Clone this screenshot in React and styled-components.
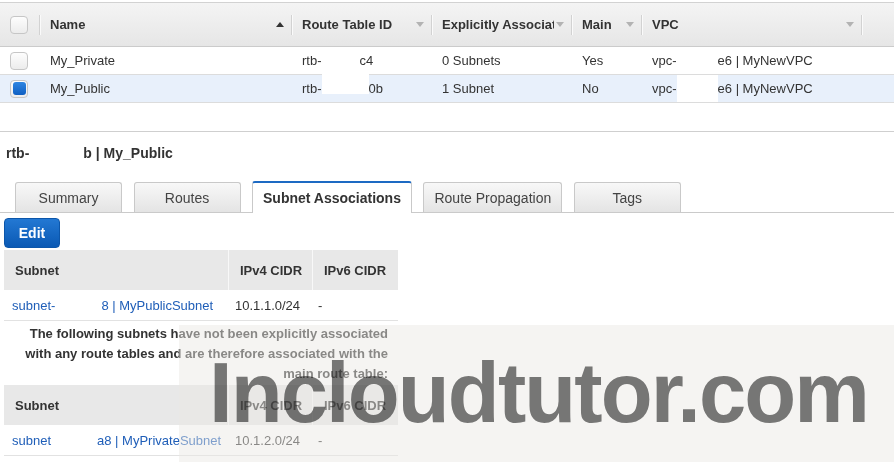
import React from 'react';
import styled, { createGlobalStyle } from 'styled-components';

const GlobalStyle = createGlobalStyle`
    body {
        margin: 0;
        font-family: "Liberation Sans", Arial, sans-serif;
        font-size: 13px;
        color: #333;
        background: #fff;
    }
    * { box-sizing: border-box; }
`;

const COLS = '39px 252px 140px 140px 70px 220px 1fr';

const Page = styled.div`
    position: relative;
    width: 894px;
    height: 462px;
    overflow: hidden;
    background: #fff;
`;

/* 위쪽 목록 */
const ListPane = styled.div`
    height: 131px;
    padding-top: 2px;
`;

const HeadRow = styled.div`
    display: grid;
    grid-template-columns: ${COLS};
    align-items: center;
    height: 45px;
    border-top: 1px solid #d2d2d2;
    border-bottom: 1px solid #cbcbcb;
    background: linear-gradient(#f4f4f4, #e6e6e6);
`;

const HeadCell = styled.div`
    display: flex;
    align-items: center;
    height: 20px;
    padding: 0 7px 0 10px;
    border-left: 1px solid #d2d2d2;
    box-shadow: inset 1px 0 #fafafa;
    font-weight: bold;
    color: #333;
    white-space: nowrap;
    min-width: 0;
`;

const CheckCell = styled.div`
    display: flex;
    align-items: center;
    padding-left: 10px;
`;

const Label = styled.span`
    flex: 1;
    overflow: hidden;
    margin-right: 2px;
`;

const Arrow = styled.span`
    width: 0;
    height: 0;
    border-left: 4px solid transparent;
    border-right: 4px solid transparent;
    ${props => props.$up
        ? 'border-bottom: 5px solid #333;'
        : 'border-top: 5px solid #b3b3b3;'}
`;

const Row = styled.div`
    display: grid;
    grid-template-columns: ${COLS};
    align-items: center;
    height: 28px;
    border-bottom: 1px solid #dcdcdc;
    background: ${props => props.$selected ? '#e8f0fb' : '#fff'};
`;

const Cell = styled.div`
    display: flex;
    align-items: center;
    height: 100%;
    padding-left: 11px;
    white-space: nowrap;
`;

const Checkbox = styled.span`
    display: flex;
    align-items: center;
    justify-content: center;
    width: 18px;
    height: 18px;
    border: 1px solid #c6c6c6;
    border-radius: 4px;
    background: linear-gradient(#fdfdfd, #ececec);
`;

const CheckFill = styled.span`
    width: 13px;
    height: 13px;
    border-radius: 3px;
    background: linear-gradient(#2f86e2, #0f5fc2);
`;

const Redact = styled.span`
    display: inline-block;
    flex-shrink: 0;
    width: ${props => props.$w}px;
    height: ${props => props.$h ? `${props.$h}px` : '100%'};
    margin-top: ${props => props.$lift ? `-${props.$lift}px` : '0'};
    background: #fff;
`;

/* 아래쪽 상세 */
const DetailPane = styled.div`
    border-top: 1px solid #cfcfcf;
`;

const Title = styled.div`
    display: flex;
    padding: 13px 6px 0;
    line-height: 17px;
    font-size: 14px;
    font-weight: bold;
    color: #333;
`;

const Gap = styled.span`
    width: ${props => props.$w}px;
`;

const TabBar = styled.div`
    display: flex;
    align-items: flex-end;
    gap: 11.5px;
    height: 32px;
    margin-top: 19px;
    padding-left: 15px;
    border-bottom: 1px solid #cacaca;
`;

const Tab = styled.div`
    display: flex;
    align-items: center;
    justify-content: center;
    min-width: 107px;
    padding: 0 10px;
    height: ${props => props.$active ? '32px' : '30px'};
    margin-bottom: ${props => props.$active ? '-1px' : '0'};
    border: 1px solid #c9c9c9;
    border-top: ${props => props.$active ? '2px solid #1d6ac3' : '1px solid #c9c9c9'};
    border-bottom: none;
    border-radius: 3px 3px 0 0;
    background: ${props => props.$active ? '#fff' : 'linear-gradient(#f8f8f8, #e4e4e4)'};
    font-size: 14px;
    font-weight: ${props => props.$active ? 'bold' : 'normal'};
    color: ${props => props.$active ? '#333' : '#444'};
`;

const EditButton = styled.button`
    display: block;
    width: 56px;
    height: 30px;
    margin: 5px 0 2px 4px;
    border: 1px solid #0c56aa;
    border-radius: 4px;
    background: linear-gradient(#2378d3, #0a59b4);
    color: #fff;
    font-family: inherit;
    font-size: 14px;
    font-weight: bold;
    padding: 0;
`;

const SubnetBox = styled.div`
    width: 394px;
    margin-left: 4px;
`;

const SubHead = styled.div`
    display: grid;
    grid-template-columns: 224px 84px 86px;
    height: 40px;
    background: #e8e8e8;
`;

const SubHeadCell = styled.div`
    display: flex;
    align-items: center;
    padding-left: 11px;
    border-left: ${props => props.$first ? 'none' : '1px solid #f8f8f8'};
    font-weight: bold;
    color: #333;
`;

const SubRow = styled.div`
    display: grid;
    grid-template-columns: 224px 84px 86px;
    height: 31px;
    border-bottom: 1px solid #e2e2e2;
`;

const SubCell = styled.div`
    display: flex;
    align-items: center;
    padding-left: ${props => props.$pad}px;
    white-space: nowrap;
    color: #333;
`;

const Link = styled.span`
    display: flex;
    align-items: center;
    color: #1f5eb8;
`;

const Note = styled.div`
    padding: 3px 10px 1px 0;
    line-height: 20px;
    text-align: right;
    font-weight: bold;
    color: #333;
`;

/* 워터마크 */
const Veil = styled.div`
    position: absolute;
    left: 179px;
    top: 325px;
    right: 0;
    bottom: 0;
    background: rgba(234, 232, 228, 0.47);
    pointer-events: none;
`;

const Watermark = styled.div`
    padding: 25px 0 0 30px;
    font-size: 85px;
    line-height: 1;
    font-weight: bold;
    letter-spacing: -1.9px;
    color: #7b7b7b;
    mix-blend-mode: multiply;
    white-space: nowrap;
`;

const columns = [
    { label: 'Name', up: true },
    { label: 'Route Table ID' },
    { label: 'Explicitly Associated With' },
    { label: 'Main' },
    { label: 'VPC' },
];

const SubnetHead = () => (
    <SubHead>
        <SubHeadCell $first>Subnet</SubHeadCell>
        <SubHeadCell>IPv4 CIDR</SubHeadCell>
        <SubHeadCell>IPv6 CIDR</SubHeadCell>
    </SubHead>
);

const App = () => (
    <Page>
        <GlobalStyle />
        <ListPane>
            <HeadRow>
                <CheckCell><Checkbox /></CheckCell>
                {columns.map(c => (
                    <HeadCell key={c.label}>
                        <Label>{c.label}</Label>
                        <Arrow $up={c.up} />
                    </HeadCell>
                ))}
                <HeadCell />
            </HeadRow>
            <Row>
                <CheckCell><Checkbox /></CheckCell>
                <Cell>My_Private</Cell>
                <Cell>rtb-<Redact $w={38} $h={20} />c4</Cell>
                <Cell>0 Subnets</Cell>
                <Cell>Yes</Cell>
                <Cell>vpc-<Redact $w={41} />e6 | MyNewVPC</Cell>
                <Cell />
            </Row>
            <Row $selected>
                <CheckCell><Checkbox><CheckFill /></Checkbox></CheckCell>
                <Cell>My_Public</Cell>
                <Cell>rtb-<Redact $w={47} $h={21} $lift={10} />0b</Cell>
                <Cell>1 Subnet</Cell>
                <Cell>No</Cell>
                <Cell>vpc-<Redact $w={41} />e6 | MyNewVPC</Cell>
                <Cell />
            </Row>
        </ListPane>
        <DetailPane>
            <Title>rtb-<Gap $w={54} />b | My_Public</Title>
            <TabBar>
                <Tab>Summary</Tab>
                <Tab>Routes</Tab>
                <Tab $active>Subnet Associations</Tab>
                <Tab>Route Propagation</Tab>
                <Tab>Tags</Tab>
            </TabBar>
            <EditButton>Edit</EditButton>
            <SubnetBox>
                <SubnetHead />
                <SubRow>
                    <SubCell $pad={8}><Link>subnet-<Gap $w={46} />8 | MyPublicSubnet</Link></SubCell>
                    <SubCell $pad={7}>10.1.1.0/24</SubCell>
                    <SubCell $pad={6}>-</SubCell>
                </SubRow>
                <Note>
                    The following subnets have not been explicitly associated with any route tables and are therefore associated with the main route table:
                </Note>
                <SubnetHead />
                <SubRow>
                    <SubCell $pad={8}><Link>subnet<Gap $w={46} />a8 | MyPrivateSubnet</Link></SubCell>
                    <SubCell $pad={7}>10.1.2.0/24</SubCell>
                    <SubCell $pad={6}>-</SubCell>
                </SubRow>
            </SubnetBox>
        </DetailPane>
        <Veil>
            <Watermark>Incloudtutor.com</Watermark>
        </Veil>
    </Page>
);

export default App;
